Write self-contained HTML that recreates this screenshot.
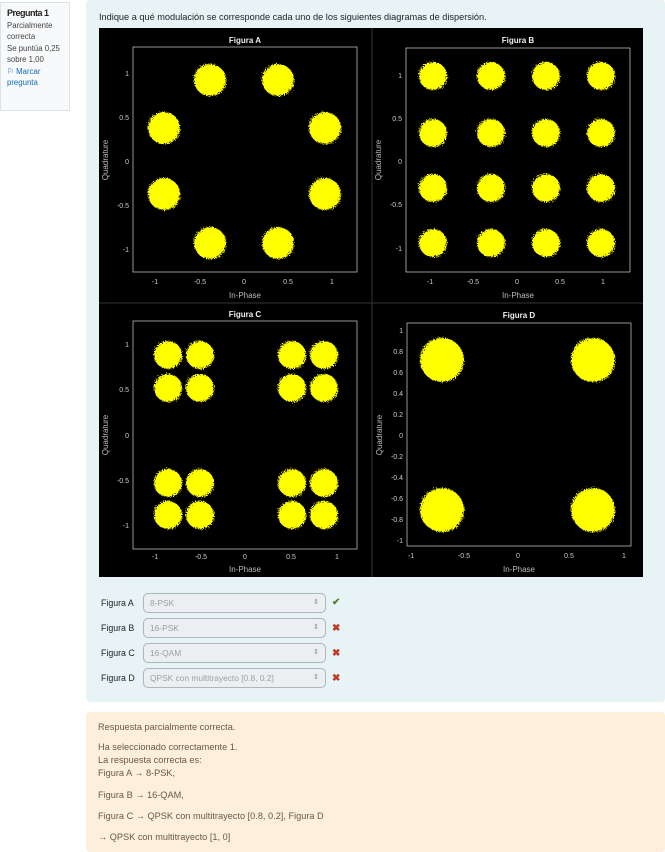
<!DOCTYPE html>
<html><head><meta charset="utf-8"><style>
body{margin:0;width:665px;height:848px;background:#fff;position:relative;overflow:hidden;font-family:"Liberation Sans",sans-serif;}
.info{position:absolute;left:0;top:2px;width:70px;height:109px;background:#f8f9fa;border:1px solid #dee2e6;box-sizing:border-box;padding:5px 6px;font-size:7.8px;color:#444;line-height:11.5px}
.info b{font-size:9px;color:#222;letter-spacing:-0.5px}
.info .l{color:#0f6cbf}
.q{position:absolute;left:86px;top:0;width:579px;height:702px;background:#e7f3f5;border-radius:4px}
.qt{position:absolute;left:99px;top:12px;font-size:9.2px;color:#1d2125}
.fb{position:absolute;left:86px;top:712px;width:579px;height:140px;background:#fcefdc;border-radius:4px;font-size:9.2px;color:#6a5a40}
.fb div{position:absolute;left:12px}
.row{position:absolute;left:101px;font-size:8.8px;color:#1d2125}
.sel{position:absolute;left:143px;width:183px;height:20px;border:1px solid #adb5bd;border-radius:5px;background:#eceff1;box-sizing:border-box;font-size:8.4px;color:#9aa0a6;padding:4px 6px;}
.sel:after{content:"⇕";position:absolute;right:6px;top:4px;font-size:7px;color:#888}
.mk{position:absolute;left:332px;font-size:10px;font-weight:bold}
</style></head><body>
<div class="info"><b>Pregunta 1</b><br>Parcialmente<br>correcta<br>Se puntúa 0,25<br>sobre 1,00<br><span class="l">⚐ Marcar<br>pregunta</span></div>
<div class="q"></div>
<div class="qt">Indique a qué modulación se corresponde cada uno de los siguientes diagramas de dispersión.</div>
<svg style="position:absolute;left:99px;top:28px" width="544" height="549" viewBox="99 28 544 549" font-family="Liberation Sans" font-size="7" fill="#ccc">
<defs><filter id="fz" x="-20%" y="-20%" width="140%" height="140%"><feTurbulence type="fractalNoise" baseFrequency="0.9" numOctaves="1" result="n"/><feDisplacementMap in="SourceGraphic" in2="n" scale="7"/></filter></defs>
<rect x="99" y="28" width="544" height="549" fill="#000"/>
<line x1="372" y1="28" x2="372" y2="577" stroke="#333"/>
<line x1="99" y1="303" x2="643" y2="303" stroke="#333"/>
<g fill="none" stroke="#bbb" stroke-width="0.8">
<rect x="133" y="47" width="224" height="225"/><rect x="406" y="48" width="224" height="224"/>
<rect x="133" y="321" width="224" height="228"/><rect x="407" y="323" width="224" height="223"/></g>
<g font-weight="bold" fill="#eee" font-size="8" text-anchor="middle">
<text x="245" y="43">Figura A</text><text x="518" y="43">Figura B</text><text x="245" y="317">Figura C</text><text x="519" y="318">Figura D</text></g>
<g text-anchor="middle" font-size="8" fill="#bbb">
<text x="245" y="298">In-Phase</text><text x="518" y="298">In-Phase</text><text x="245" y="572">In-Phase</text><text x="519" y="572">In-Phase</text>
<text transform="translate(108,160) rotate(-90)">Quadrature</text><text transform="translate(381,160) rotate(-90)">Quadrature</text>
<text transform="translate(108,435) rotate(-90)">Quadrature</text><text transform="translate(382,435) rotate(-90)">Quadrature</text></g>
<g text-anchor="middle">
<text x="155" y="284">-1</text><text x="200" y="284">-0.5</text><text x="244" y="284">0</text><text x="288" y="284">0.5</text><text x="332" y="284">1</text>
<text x="430" y="284">-1</text><text x="473" y="284">-0.5</text><text x="517" y="284">0</text><text x="560" y="284">0.5</text><text x="603" y="284">1</text>
<text x="155" y="559">-1</text><text x="201" y="559">-0.5</text><text x="245" y="559">0</text><text x="291" y="559">0.5</text><text x="337" y="559">1</text>
<text x="411" y="558">-1</text><text x="464" y="558">-0.5</text><text x="518" y="558">0</text><text x="569" y="558">0.5</text><text x="624" y="558">1</text></g>
<g text-anchor="end">
<text x="129" y="76">1</text><text x="129" y="120">0.5</text><text x="129" y="164">0</text><text x="129" y="208">-0.5</text><text x="129" y="252">-1</text>
<text x="402" y="78">1</text><text x="402" y="121">0.5</text><text x="402" y="164">0</text><text x="402" y="207">-0.5</text><text x="402" y="251">-1</text>
<text x="129" y="347">1</text><text x="129" y="392">0.5</text><text x="129" y="438">0</text><text x="129" y="483">-0.5</text><text x="129" y="528">-1</text>
<text x="403" y="333">1</text><text x="403" y="354">0.8</text><text x="403" y="375">0.6</text><text x="403" y="396">0.4</text><text x="403" y="417">0.2</text><text x="403" y="438">0</text><text x="403" y="459">-0.2</text><text x="403" y="480">-0.4</text><text x="403" y="501">-0.6</text><text x="403" y="522">-0.8</text><text x="403" y="543">-1</text></g>
<g fill="#ffff00" filter="url(#fz)">
<circle cx="210" cy="80" r="16"/><circle cx="278" cy="80" r="16"/><circle cx="164" cy="128" r="16"/><circle cx="325" cy="128" r="16"/><circle cx="164" cy="194" r="16"/><circle cx="325" cy="194" r="16"/><circle cx="210" cy="243" r="16"/><circle cx="278" cy="243" r="16"/>
<circle cx="433" cy="76" r="14"/><circle cx="491" cy="76" r="14"/><circle cx="546" cy="76" r="14"/><circle cx="601" cy="76" r="14"/>
<circle cx="433" cy="133" r="14"/><circle cx="491" cy="133" r="14"/><circle cx="546" cy="133" r="14"/><circle cx="601" cy="133" r="14"/>
<circle cx="433" cy="188" r="14"/><circle cx="491" cy="188" r="14"/><circle cx="546" cy="188" r="14"/><circle cx="601" cy="188" r="14"/>
<circle cx="433" cy="243" r="14"/><circle cx="491" cy="243" r="14"/><circle cx="546" cy="243" r="14"/><circle cx="601" cy="243" r="14"/>
<circle cx="168" cy="355" r="14"/><circle cx="200" cy="355" r="14"/><circle cx="292" cy="355" r="14"/><circle cx="324" cy="355" r="14"/>
<circle cx="168" cy="388" r="14"/><circle cx="200" cy="388" r="14"/><circle cx="292" cy="388" r="14"/><circle cx="324" cy="388" r="14"/>
<circle cx="168" cy="483" r="14"/><circle cx="200" cy="483" r="14"/><circle cx="292" cy="483" r="14"/><circle cx="324" cy="483" r="14"/>
<circle cx="168" cy="515" r="14"/><circle cx="200" cy="515" r="14"/><circle cx="292" cy="515" r="14"/><circle cx="324" cy="515" r="14"/>
<circle cx="442" cy="360" r="22"/><circle cx="593" cy="360" r="22"/><circle cx="442" cy="510" r="22"/><circle cx="593" cy="510" r="22"/>
</g>
</svg>
<div class="row" style="top:598px">Figura A</div><div class="sel" style="top:593px">8-PSK</div><div class="mk" style="top:597px;color:#5a7d3a">✔</div>
<div class="row" style="top:623px">Figura B</div><div class="sel" style="top:618px">16-PSK</div><div class="mk" style="top:623px;color:#c0392b">✖</div>
<div class="row" style="top:648px">Figura C</div><div class="sel" style="top:643px">16-QAM</div><div class="mk" style="top:648px;color:#c0392b">✖</div>
<div class="row" style="top:673px">Figura D</div><div class="sel" style="top:668px">QPSK con multitrayecto [0.8, 0.2]</div><div class="mk" style="top:673px;color:#c0392b">✖</div>
<div class="fb">
<div style="top:10px">Respuesta parcialmente correcta.</div>
<div style="top:30px">Ha seleccionado correctamente 1.</div>
<div style="top:43px">La respuesta correcta es:</div>
<div style="top:56px">Figura A → 8-PSK,</div>
<div style="top:78px">Figura B → 16-QAM,</div>
<div style="top:99px">Figura C → QPSK con multitrayecto [0.8, 0.2], Figura D</div>
<div style="top:120px">→ QPSK con multitrayecto [1, 0]</div>
</div>
</body></html>
